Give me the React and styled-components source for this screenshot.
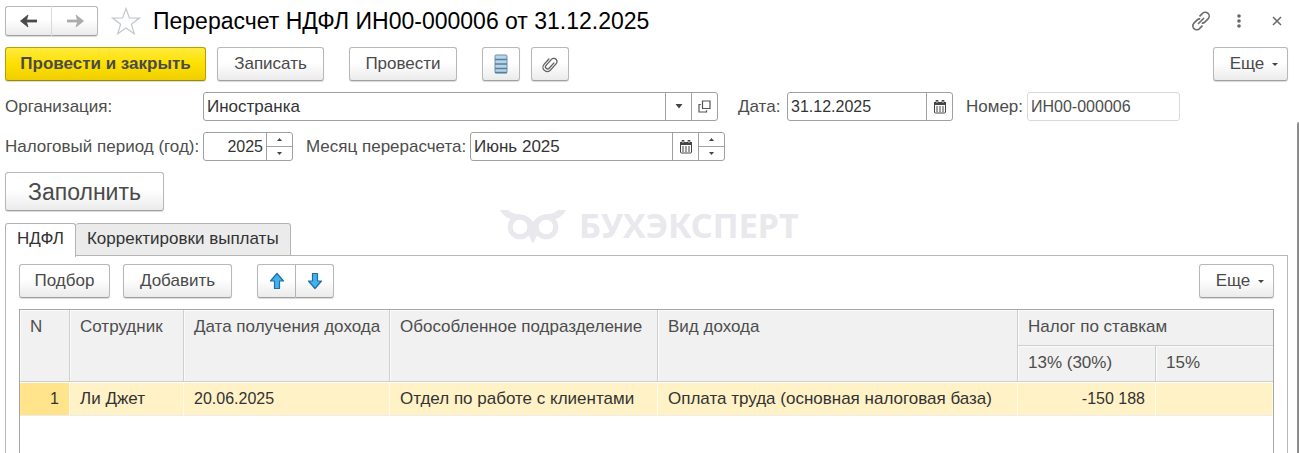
import React from "react";
import styled, { createGlobalStyle } from "styled-components";

const GlobalStyle = createGlobalStyle`
  * {
    box-sizing: border-box;
  }
  body {
    margin: 0;
    background: #fff;
    color: #4d4d4d;
    font-family: "Liberation Sans", Arial, sans-serif;
    font-size: 17px;
    line-height: 20px;
  }
  button,
  input {
    font: inherit;
    color: inherit;
  }
`;

const Page = styled.div`
  position: relative;
  display: flex;
  flex-direction: column;
  min-height: 100vh;
  padding: 6px 11px 0 5px;
`;

const Header = styled.header`
  display: flex;
  align-items: center;
  height: 30px;
  margin-right: -8px;
`;

const Title = styled.h1`
  flex: 1;
  margin: 0 0 0 12px;
  color: #000;
  font-size: 23px;
  font-weight: 400;
  line-height: 28px;
`;

const Button = styled.button`
  display: inline-flex;
  align-items: center;
  justify-content: center;
  width: ${props => props.width};
  height: ${props => (props.large ? "39px" : "34px")};
  padding: 0 16px;
  border: 1px solid ${props => (props.primary ? "#b5a000" : "#b8b8b8")};
  border-bottom-color: ${props => (props.primary ? "#9c8a00" : "#a0a0a0")};
  border-radius: 3px;
  background: ${props =>
    props.primary
      ? "linear-gradient(#ffea3d, #fde000 50%, #efcf00)"
      : "linear-gradient(#fff, #fff 45%, #ebebeb)"};
  box-shadow: 0 1px 1px rgba(0, 0, 0, 0.15);
  color: #4a4a4a;
  font-size: ${props => (props.large ? "23px" : "17px")};
  font-weight: ${props => (props.primary ? 700 : 400)};
  white-space: nowrap;
`;

const IconButton = styled(Button)`
  width: 38px;
  padding: 0;
`;

const MoreButton = styled(Button)`
  width: 75px;
  gap: 8px;
  padding: 0 0 0 7px;
  margin-left: auto;
`;

const ButtonGroup = styled.div`
  display: flex;

  button:first-child {
    width: 39px;
    border-radius: 3px 0 0 3px;
  }
  button:last-child {
    border-left: 0;
    border-radius: 0 3px 3px 0;
  }
`;

const HistoryGroup = styled(ButtonGroup)`
  margin-right: 13px;

  button {
    width: 46px;
    height: 30px;
  }
  button:first-child {
    width: 47px;
    border-right-color: #ddd;
  }
`;

const PlainButton = styled.button`
  display: flex;
  align-items: center;
  justify-content: center;
  width: 38px;
  height: 28px;
  padding: 0;
  border: 0;
  background: none;
`;

const StarButton = styled(PlainButton)`
  width: 30px;
`;

const CommandBar = styled.div`
  display: flex;
  gap: ${props => props.gap};
  margin-top: ${props => props.top};
`;

const CommandGroup = styled.div`
  display: flex;
  gap: 11px;
`;

const FormRow = styled.div`
  display: flex;
  align-items: center;
  margin-top: 11px;
`;

const Label = styled.label`
  flex: none;
  width: ${props => props.width};
  margin-left: ${props => props.left};
  white-space: nowrap;
`;

const Field = styled.div`
  display: flex;
  flex: 0 1 ${props => props.width};
  min-width: 0;
  height: 29px;
  border: 1px solid ${props => (props.readOnly ? "#d9d9d9" : "#a0a0a0")};
  border-radius: 3px;
  background: #fff;
`;

const Input = styled.input`
  flex: 1;
  min-width: 0;
  padding: 0 3px;
  border: 0;
  outline: 0;
  background: none;
  color: ${props => (props.readOnly ? "#4d4d4d" : "#333")};
  font-size: ${props => (props.digits ? "16px" : "17px")};
  text-align: ${props => (props.numeric ? "right" : "left")};
`;

const FieldButton = styled.button`
  display: flex;
  flex: none;
  align-items: center;
  justify-content: center;
  width: 26px;
  padding: 0;
  border: 0;
  border-left: 1px solid #a0a0a0;
  background: none;
`;

const Spinner = styled.div`
  display: flex;
  flex: none;
  flex-direction: column;
  width: 26px;
  border-left: 1px solid #a0a0a0;

  button {
    display: flex;
    flex: 1;
    align-items: center;
    justify-content: center;
    padding: 0;
    border: 0;
    background: none;
  }
  button + button {
    border-top: 1px solid #a0a0a0;
  }
`;

const FillBar = styled.div`
  display: flex;
  margin-top: 11px;
`;

const Tabs = styled.div`
  display: flex;
  height: 33px;
  margin-top: 12px;
`;

const Tab = styled.button`
  z-index: ${props => (props.active ? 1 : 0)};
  height: ${props => (props.active ? "34px" : "33px")};
  padding: 0 11px ${props => (props.active ? "4px" : "2px")};
  border: 1px solid #b4b4b4;
  border-bottom: ${props => (props.active ? "0" : "1px solid #b4b4b4")};
  border-radius: 3px 3px 0 0;
  background: ${props => (props.active ? "#fff" : "#ebebeb")};
  color: #333;

  & + & {
    border-left: 0;
  }
`;

const Panel = styled.section`
  display: flex;
  flex: 1;
  flex-direction: column;
  margin-top: -1px;
  padding: 0 13px;
  border: 1px solid #b8b8b8;
  border-bottom: 0;
`;

const TableBox = styled.div`
  flex: 1;
  margin-top: 11px;
  border: 1px solid #a6a6a6;
  border-bottom: 0;
`;

const Table = styled.table`
  width: 100%;
  border-collapse: separate;
  border-spacing: 0;
  table-layout: fixed;
`;

const Col = styled.col`
  width: ${props => props.width};
`;

const HeadCell = styled.th`
  height: 36px;
  padding: 7px 10px 5px;
  border-right: 1px solid #cfcfcf;
  border-bottom: 1px solid #cfcfcf;
  background: #f1f1f1;
  box-shadow: inset 1px 1px #fbfbfb;
  font-weight: 400;
  text-align: left;
  vertical-align: top;
  white-space: nowrap;

  &.last {
    border-right: 0;
  }
`;

const Cell = styled.td`
  height: 34px;
  padding: 0 10px;
  border-top: 1px solid #fff;
  border-right: 1px solid #fffaea;
  border-bottom: 1px solid #ececec;
  background: ${props => (props.current ? "#ffe48c" : "#fff2c7")};
  color: #333;
  font-size: ${props => (props.digits ? "16px" : "17px")};
  text-align: ${props => (props.numeric ? "right" : "left")};
  white-space: nowrap;
`;

const Watermark = styled.div`
  position: absolute;
  top: 205px;
  left: 500px;
  display: flex;
  align-items: center;
  gap: 12px;
  color: #e8e8ed;
  font-family: "Noto Sans", sans-serif;
  font-size: 34px;
  font-weight: 700;
  line-height: 40px;
  pointer-events: none;
`;

const ScrollMark = styled.div`
  position: absolute;
  top: 122px;
  right: 0;
  bottom: 0;
  width: 2px;
  border-radius: 2px 0 0 0;
  background: #8c8c8c;
`;

const Arrow = ({ color, flip }) => (
  <svg width="18" height="14" viewBox="0 0 18 14">
    <path
      d={flip ? "M1 7h12" : "M17 7H5"}
      fill="none"
      stroke={color}
      strokeWidth="2.8"
    />
    <path
      d={flip ? "M10 1l7.500 6-7.500 6 1.800-6z" : "M8 1L.5 7 8 13 6.200 7z"}
      fill={color}
      stroke={color}
      strokeWidth="0.8"
    />
  </svg>
);

const Star = () => (
  <svg width="30" height="28" viewBox="0 0 30 28">
    <path
      d="M15 1.5l3.4 9.4 10 .2-8 6.1 2.9 9.6-8.3-5.7-8.3 5.7 2.9-9.6-8-6.1 10-.2z"
      fill="#fff"
      stroke="#c3c8ce"
      strokeWidth="1.2"
    />
  </svg>
);

const LinkIcon = () => (
  <svg width="20" height="20" viewBox="0 0 20 20" fill="none" stroke="#6b6b6b" strokeWidth="1.6">
    <path d="M8.500 5.400l2.800-2.800a3.700 3.700 0 0 1 6 5l-3.500 3.500a3.500 3.500 0 0 1-3 1" />
    <path d="M11.500 14.600l-2.800 2.800a3.700 3.700 0 0 1-6-5l3.500-3.500a3.500 3.500 0 0 1 3-1" />
    <path d="M7 13l6-6" />
  </svg>
);

const Dots = () => (
  <svg width="6" height="16" viewBox="0 0 6 16" fill="#666">
    <circle cx="3" cy="3" r="1.8" />
    <circle cx="3" cy="8" r="1.8" />
    <circle cx="3" cy="13" r="1.8" />
  </svg>
);

const Close = () => (
  <svg width="10" height="10" viewBox="0 0 10 10">
    <path d="M1 1l8 8M9 1L1 9" stroke="#666" strokeWidth="1.5" />
  </svg>
);

const ListIcon = () => (
  <svg width="14" height="20" viewBox="0 0 14 20">
    <rect x="1" y="1" width="12" height="18" rx="1" fill="#b9d4e6" stroke="#6a93b0" />
    <path d="M1 5.500h12M1 10h12M1 14.500h12M1 18.500h12" stroke="#557f9f" strokeWidth="1.400" />
  </svg>
);

const Clip = () => (
  <svg width="18" height="18" viewBox="0 0 18 18">
    <g transform="rotate(42 9 9)">
      <path
        d="M11.200 5.500v7.200a2.100 2.100 0 0 1-4.200 0V4.600a3.200 3.200 0 0 1 6.400 0v8.600a4.300 4.300 0 0 1-8.600 0V6"
        fill="none"
        stroke="#5f5f5f"
        strokeWidth="1.300"
        strokeLinecap="round"
      />
    </g>
  </svg>
);

const Triangle = ({ up, size = 6 }) => (
  <svg width={size} height="3" viewBox={`0 0 ${size} 3`} fill="#444">
    <path d={up ? `M0 3h${size}L${size / 2} 0z` : `M0 0h${size}L${size / 2} 3z`} />
  </svg>
);

const DropTriangle = () => (
  <svg width="8" height="5" viewBox="0 0 8 5" fill="#444">
    <path d="M.5 0h7L4 4.500z" />
  </svg>
);

const OpenIcon = () => (
  <svg width="13" height="13" viewBox="0 0 13 13" fill="none" stroke="#555" strokeWidth="1.2">
    <path d="M4.500 1h7.500v7.500H4.500zM2.800 4.500H1V12h7.500v-1.800" />
  </svg>
);

const Calendar = () => (
  <svg width="14" height="14" viewBox="0 0 14 14">
    <rect x="1.500" y="2.500" width="11" height="10.500" rx="1" fill="#fff" stroke="#444" />
    <path d="M1 2h12v3H1z" fill="#444" />
    <path d="M4 0v3M10 0v3" stroke="#444" strokeWidth="2.600" />
    <path d="M4 1v2M10 1v2" stroke="#fff" strokeWidth=".8" />
    <path
      d="M3 7h2M6 7h2M9 7h2M3 9h2M6 9h2M9 9h2M3 11h2M6 11h2M9 11h2"
      stroke="#444"
      strokeWidth="1.200"
    />
  </svg>
);

const MoveArrow = ({ down }) => (
  <svg width="16" height="18" viewBox="0 0 16 18">
    <path
      d={
        down
          ? "M5.500 1.500h5V9H14.500L8 16.500 1.500 9h4z"
          : "M5.500 16.500h5V9H14.500L8 1.500 1.500 9h4z"
      }
      fill="#45b0ee"
      stroke="#1c6ea4"
      strokeWidth="1.200"
      strokeLinejoin="round"
    />
  </svg>
);

const Owl = () => (
  <svg width="67" height="38" viewBox="0 0 67 38">
    <g fill="#e8e8ed">
      <path d="M0 4h8c4 4 8 4 13 4.500 5 .5 9 3 12 7.500 3-4.500 7-7 12-7.500 5-.5 9-.5 13-4.500h8c-3 5-6 8-11 9L33 22 11 13C6 12 3 9 0 4z" />
      <path d="M28 26l5-10 5 10c-1 4-3 8-5 11.500-2-3.500-4-7.500-5-11.500z" />
    </g>
    <g fill="#fff" stroke="#e8e8ed" strokeWidth="5">
      <circle cx="20" cy="21" r="9.800" />
      <circle cx="46" cy="21" r="9.800" />
    </g>
  </svg>
);

const SpinButtons = () => (
  <Spinner>
    <button type="button" aria-label="Больше">
      <Triangle up size={5} />
    </button>
    <button type="button" aria-label="Меньше">
      <Triangle size={5} />
    </button>
  </Spinner>
);

const CalendarButton = () => (
  <FieldButton type="button" aria-label="Календарь">
    <Calendar />
  </FieldButton>
);

const More = () => (
  <MoreButton type="button">
    Еще <Triangle />
  </MoreButton>
);

const columns = ["N", "Сотрудник", "Дата получения дохода", "Обособленное подразделение", "Вид дохода"];

export default function App() {
  return (
    <Page>
      <GlobalStyle />
      <Header>
        <HistoryGroup>
          <IconButton type="button" aria-label="Назад">
            <Arrow color="#4a4a4a" />
          </IconButton>
          <IconButton type="button" aria-label="Вперед">
            <Arrow color="#ababab" flip />
          </IconButton>
        </HistoryGroup>
        <StarButton type="button" aria-label="В избранное">
          <Star />
        </StarButton>
        <Title>Перерасчет НДФЛ ИН00-000006 от 31.12.2025</Title>
        <PlainButton type="button" aria-label="Ссылка">
          <LinkIcon />
        </PlainButton>
        <PlainButton type="button" aria-label="Меню">
          <Dots />
        </PlainButton>
        <PlainButton type="button" aria-label="Закрыть">
          <Close />
        </PlainButton>
      </Header>

      <CommandBar gap="25px" top="11px">
        <CommandGroup>
          <Button type="button" primary="true" width="201px">
            Провести и закрыть
          </Button>
          <Button type="button" width="107px">
            Записать
          </Button>
        </CommandGroup>
        <Button type="button" width="108px">
          Провести
        </Button>
        <CommandGroup>
          <IconButton type="button" aria-label="Движения документа">
            <ListIcon />
          </IconButton>
          <IconButton type="button" aria-label="Файлы">
            <Clip />
          </IconButton>
        </CommandGroup>
        <More />
      </CommandBar>

      <FormRow>
        <Label htmlFor="org" width="198px">
          Организация:
        </Label>
        <Field width="515px">
          <Input id="org" defaultValue="Иностранка" />
          <FieldButton type="button" aria-label="Выбрать">
            <DropTriangle />
          </FieldButton>
          <FieldButton type="button" aria-label="Открыть">
            <OpenIcon />
          </FieldButton>
        </Field>
        <Label htmlFor="date" width="49px" left="20px">
          Дата:
        </Label>
        <Field width="166px">
          <Input id="date" defaultValue="31.12.2025" digits="true" />
          <CalendarButton />
        </Field>
        <Label htmlFor="number" width="61px" left="13px">
          Номер:
        </Label>
        <Field width="153px" readOnly>
          <Input id="number" defaultValue="ИН00-000006" digits="true" readOnly />
        </Field>
      </FormRow>

      <FormRow>
        <Label htmlFor="year" width="198px">
          Налоговый период (год):
        </Label>
        <Field width="90px">
          <Input id="year" defaultValue="2025" digits="true" numeric="true" />
          <SpinButtons />
        </Field>
        <Label htmlFor="month" width="164px" left="13px">
          Месяц перерасчета:
        </Label>
        <Field width="255px">
          <Input id="month" defaultValue="Июнь 2025" />
          <CalendarButton />
          <SpinButtons />
        </Field>
      </FormRow>

      <FillBar>
        <Button type="button" large="true" width="159px">
          Заполнить
        </Button>
      </FillBar>

      <Tabs role="tablist">
        <Tab type="button" role="tab" aria-selected="true" active="true">
          НДФЛ
        </Tab>
        <Tab type="button" role="tab" aria-selected="false">
          Корректировки выплаты
        </Tab>
      </Tabs>
      <Panel>
        <CommandBar gap="13px" top="8px">
          <Button type="button" width="91px">
            Подбор
          </Button>
          <CommandBar gap="25px" top="0">
            <Button type="button" width="109px">
              Добавить
            </Button>
            <ButtonGroup>
              <IconButton type="button" aria-label="Переместить вверх">
                <MoveArrow />
              </IconButton>
              <IconButton type="button" aria-label="Переместить вниз">
                <MoveArrow down />
              </IconButton>
            </ButtonGroup>
          </CommandBar>
          <More />
        </CommandBar>
        <TableBox>
          <Table>
            <colgroup>
              <Col width="50px" />
              <Col width="114px" />
              <Col width="206px" />
              <Col width="268px" />
              <Col width="360px" />
              <Col width="138px" />
              <Col />
            </colgroup>
            <thead>
              <tr>
                {columns.map(name => (
                  <HeadCell key={name} rowSpan="2">
                    {name}
                  </HeadCell>
                ))}
                <HeadCell colSpan="2" className="last">
                  Налог по ставкам
                </HeadCell>
              </tr>
              <tr>
                <HeadCell>13% (30%)</HeadCell>
                <HeadCell className="last">15%</HeadCell>
              </tr>
            </thead>
            <tbody>
              <tr>
                <Cell current="true" digits="true" numeric="true">
                  1
                </Cell>
                <Cell>Ли Джет</Cell>
                <Cell digits="true">20.06.2025</Cell>
                <Cell>Отдел по работе с клиентами</Cell>
                <Cell>Оплата труда (основная налоговая база)</Cell>
                <Cell digits="true" numeric="true">
                  -150 188
                </Cell>
                <Cell />
              </tr>
            </tbody>
          </Table>
        </TableBox>
      </Panel>

      <Watermark>
        <Owl />
        БУХЭКСПЕРТ
      </Watermark>
      <ScrollMark />
    </Page>
  );
}
